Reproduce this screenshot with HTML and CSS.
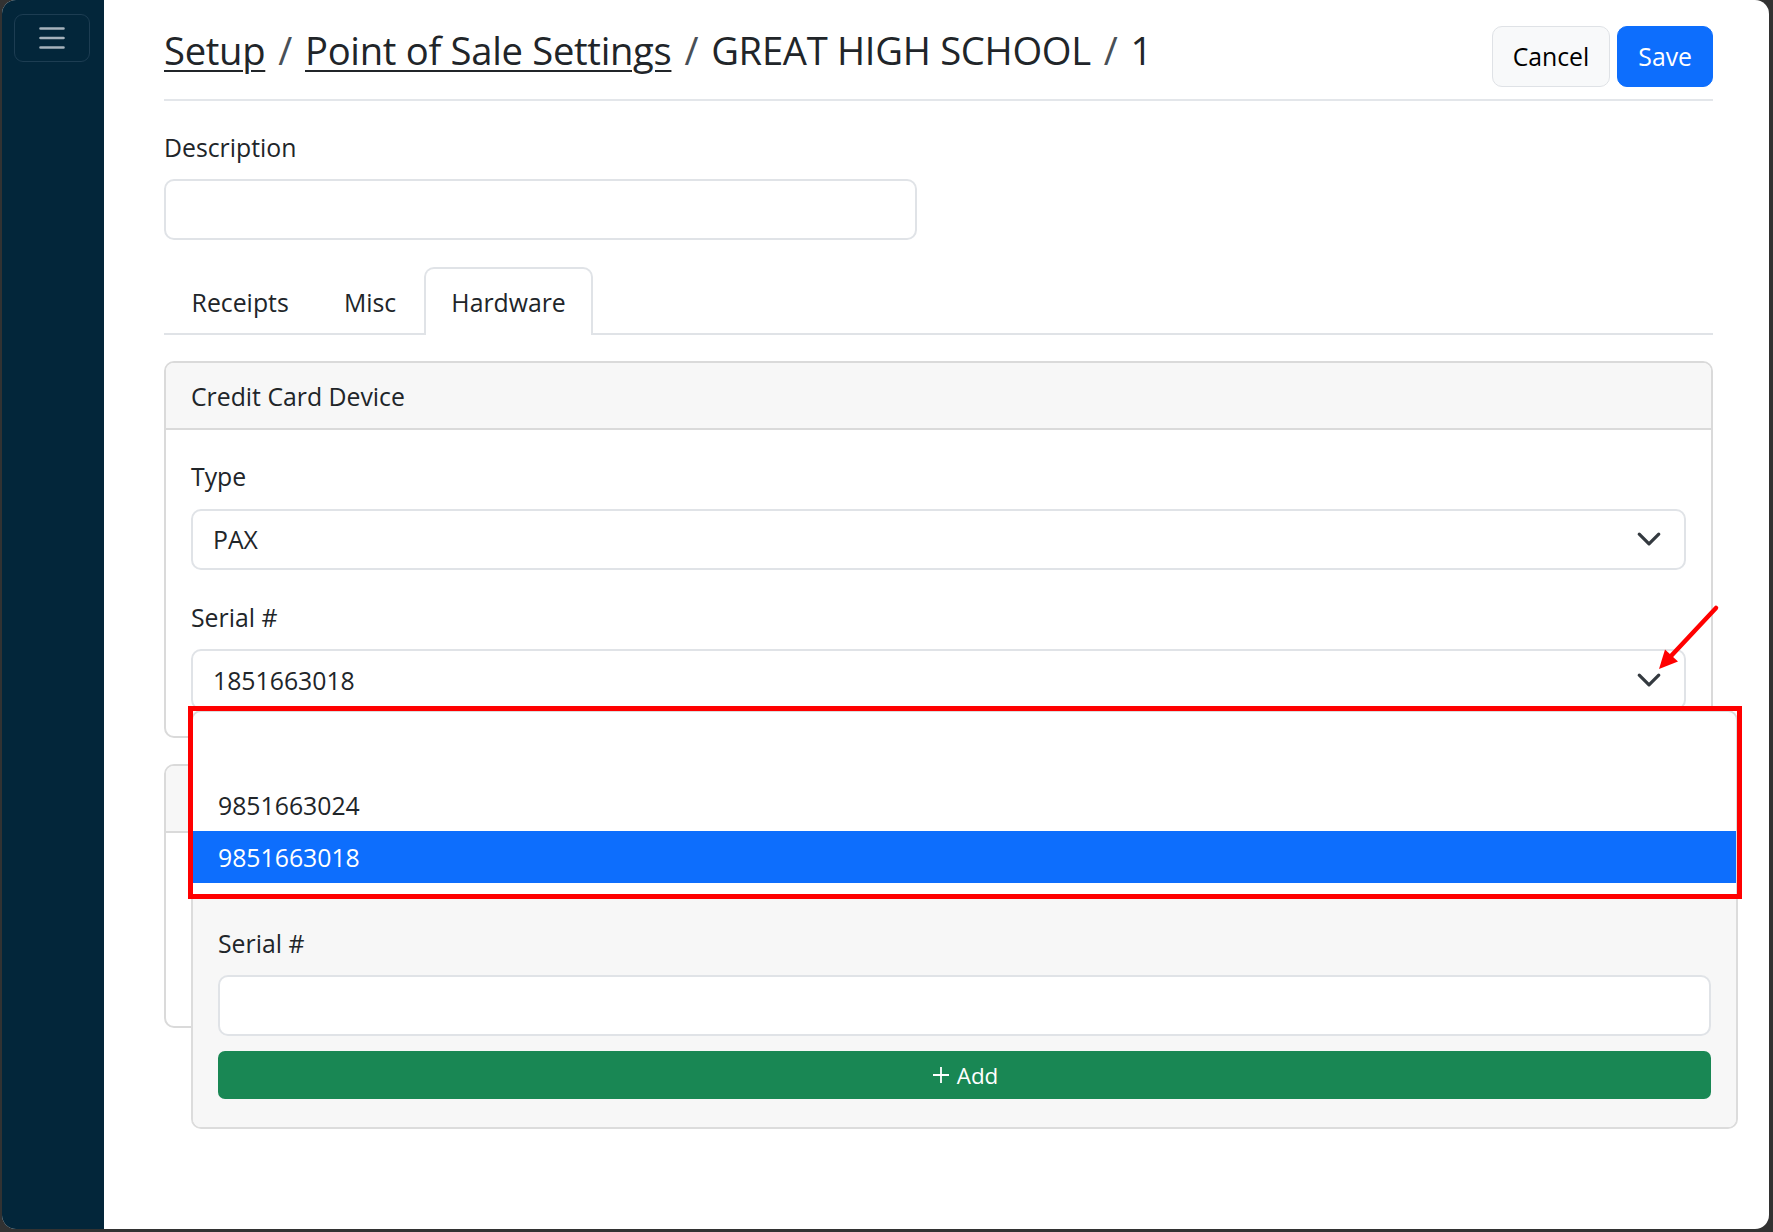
FILE: index.html
```html
<!DOCTYPE html>
<html lang="en">
<head>
<meta charset="utf-8">
<title>Point of Sale Settings</title>
<link rel="stylesheet" href="styles.css">
</head>
<body>
<div class="window">
  <aside class="sidebar">
    <button class="menu-btn" aria-label="Menu">
      <svg width="26" height="24" viewBox="0 0 26 24"><path d="M1.5 2.5h23M1.5 12h23M1.5 21.5h23" stroke="#a6b2bc" stroke-width="2.6" stroke-linecap="round" fill="none"/></svg>
    </button>
  </aside>
  <main class="main">
    <header class="page-header">
      <h1 class="title"><a href="#">Setup</a><span class="sep">/</span><a href="#">Point of Sale Settings</a><span class="sep">/</span><span>GREAT HIGH SCHOOL</span><span class="sep">/</span><span>1</span></h1>
      <div class="actions">
        <button class="btn btn-light">Cancel</button>
        <button class="btn btn-primary">Save</button>
      </div>
    </header>

    <div class="field desc">
      <label class="label">Description</label>
      <input class="control" type="text">
    </div>

    <nav class="tabs">
      <a class="tab" href="#">Receipts</a>
      <a class="tab" href="#">Misc</a>
      <a class="tab active" href="#">Hardware</a>
    </nav>

    <section class="card">
      <div class="card-header">Credit Card Device</div>
      <div class="card-body">
        <div class="field">
          <label class="label">Type</label>
          <div class="select">
            <span>PAX</span>
            <svg class="chev" width="26" height="20" viewBox="0 0 16 12"><path d="m2 3 6 6 6-6" stroke="#343a40" stroke-width="2" stroke-linecap="round" stroke-linejoin="round" fill="none"/></svg>
          </div>
        </div>
        <div class="field last">
          <label class="label">Serial #</label>
          <div class="select-wrap">
            <div class="select">
              <span>1851663018</span>
              <svg class="chev" width="26" height="20" viewBox="0 0 16 12"><path d="m2 3 6 6 6-6" stroke="#343a40" stroke-width="2" stroke-linecap="round" stroke-linejoin="round" fill="none"/></svg>
            </div>
            <div class="menu">
              <ul class="options">
                <li class="option empty"></li>
                <li class="option">9851663024</li>
                <li class="option selected">9851663018</li>
              </ul>
              <div class="add-panel">
                <label class="label">Serial #</label>
                <input class="control" type="text">
                <button class="btn-add">
                  <svg width="20" height="20" viewBox="0 0 20 20"><path d="M10 2v16M2 10h16" stroke="#fff" stroke-width="1.8" fill="none"/></svg>
                  <span>Add</span>
                </button>
              </div>
            </div>
            <div class="annot-box"></div>
            <svg class="annot-arrow" width="80" height="76" viewBox="0 0 80 76">
              <path d="M70 5 L25.5 52.5" stroke="#ff0000" stroke-width="4.5" stroke-linecap="round" fill="none"/>
              <path d="M13 66 L19 46.5 L32 58.5 Z" fill="#ff0000"/>
            </svg>
          </div>
        </div>
      </div>
    </section>

    <section class="card second">
      <div class="card-header blank"></div>
      <div class="card-body blank-body"></div>
    </section>
  </main>
</div>
</body>
</html>
```

FILE: styles.css
```css
* { box-sizing: border-box; }

html, body {
  margin: 0;
  padding: 0;
}

body {
  background: #323232;
  font-family: "Open Sans", "Noto Sans", sans-serif;
  font-size: 24.8px;
  color: #212529;
  overflow: hidden;
}

.window {
  display: flex;
  height: 1229px;
  margin: 0 4px 0 2px;
  background: #ffffff;
  border-radius: 14px;
  overflow: hidden;
}

.sidebar {
  width: 102px;
  flex: none;
  background: #03263a;
  padding: 14px 0 0 12px;
}

.menu-btn {
  width: 76px;
  height: 48px;
  background: transparent;
  border: 1.5px solid #1d3d52;
  border-radius: 9px;
  display: flex;
  align-items: center;
  justify-content: center;
  padding: 0;
}

.main {
  flex: 1;
  padding: 26px 56px 0 60px;
}

.page-header {
  display: flex;
  justify-content: space-between;
  align-items: flex-start;
  padding-bottom: 12px;
  border-bottom: 2px solid #e3e6ea;
}

.title {
  margin: 2px 0 0;
  font-size: 38.2px;
  font-weight: 400;
  line-height: 1.2;
  color: #212529;
  letter-spacing: -0.3px;
}

.title a {
  color: #212529;
  text-decoration: underline;
  text-decoration-thickness: 2px;
  text-underline-offset: 5px;
}

.sep {
  margin: 0 13px;
  color: #495057;
}

.actions {
  display: flex;
  gap: 7px;
}

.btn {
  height: 61px;
  padding: 0 20px;
  font-family: inherit;
  font-size: 24.8px;
  border-radius: 10px;
  border: 1.5px solid transparent;
  line-height: 1;
}

.btn-light {
  background: #f8f9fa;
  border-color: #dfe2e6;
  color: #000;
}

.btn-primary {
  background: #0d6efd;
  border-color: #0d6efd;
  color: #fff;
}

.field {
  margin-bottom: 28px;
}

.field.last {
  margin-bottom: 0;
}

.desc {
  margin-top: 27px;
  width: 753px;
  margin-bottom: 0;
}

.label {
  display: block;
  line-height: 38.4px;
  margin-bottom: 13px;
}

.control {
  display: block;
  width: 100%;
  height: 61px;
  border: 2px solid #e0e3e7;
  border-radius: 10px;
  background: #fff;
  font-family: inherit;
  font-size: 24.8px;
  padding: 0 20px;
}

.tabs {
  display: flex;
  margin-top: 27px;
  border-bottom: 2px solid #e0e3e7;
}

.tab {
  display: block;
  padding: 14px 25.6px 11px;
  line-height: 38.4px;
  border: 2px solid transparent;
  border-bottom: 0;
  border-radius: 10px 10px 0 0;
  color: #212529;
  text-decoration: none;
}

.tab.active {
  border-color: #e0e3e7;
  background: #fff;
  margin-bottom: -2px;
  padding-bottom: 13px;
}

.card {
  margin-top: 26px;
  border: 2px solid #dadada;
  border-radius: 10px;
}

.card.second {
  margin-top: 26px;
}

.card-header {
  background: #f7f7f7;
  padding: 14px 25px 13px;
  line-height: 38.4px;
  border-bottom: 2px solid #dadada;
  border-radius: 8px 8px 0 0;
}

.card-header.blank {
  height: 67.4px;
}

.card-body {
  padding: 27px 25px 26px 25px;
}

.blank-body {
  height: 193px;
}

.select {
  display: flex;
  align-items: center;
  justify-content: space-between;
  height: 61px;
  border: 2px solid #e0e3e7;
  border-radius: 10px;
  padding: 0 22px 0 20px;
  background: #fff;
}

.chev {
  display: block;
}

.select-wrap {
  position: relative;
}

.menu {
  position: absolute;
  top: 100%;
  left: 0;
  width: 1547px;
  background: #fff;
  border: 2px solid #dcdcdc;
  border-radius: 10px;
  z-index: 5;
  overflow: hidden;
}

.options {
  list-style: none;
  margin: 0;
  padding: 15px 0 14px;
}

.option {
  height: 52px;
  line-height: 52px;
  padding-left: 25px;
  color: #212529;
}

.option.selected {
  background: #0d6efd;
  color: #fff;
}

.add-panel {
  background: #f7f7f7;
  padding: 27px 25px 28px 25px;
}

.btn-add {
  margin-top: 15px;
  width: 100%;
  height: 48px;
  background: #198754;
  border: 0;
  border-radius: 7px;
  color: #fff;
  font-family: inherit;
  font-size: 22.4px;
  display: flex;
  align-items: center;
  justify-content: center;
  gap: 6px;
}

.annot-box {
  position: absolute;
  left: -3px;
  top: 57px;
  width: 1554px;
  height: 193px;
  border: 5px solid #ff0000;
  z-index: 6;
  pointer-events: none;
}

.annot-arrow {
  position: absolute;
  left: 1455px;
  top: -46px;
  z-index: 6;
}
```
